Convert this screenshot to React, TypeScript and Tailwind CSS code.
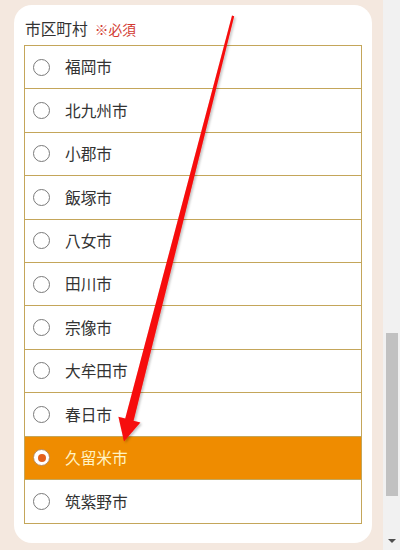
import React from "react";

const CITIES = [
  "福岡市",
  "北九州市",
  "小郡市",
  "飯塚市",
  "八女市",
  "田川市",
  "宗像市",
  "大牟田市",
  "春日市",
  "久留米市",
  "筑紫野市",
];

const SELECTED = "久留米市";

function Radio({ checked }: { checked: boolean }) {
  if (checked) {
    return (
      <span className="flex h-[17px] w-[17px] shrink-0 items-center justify-center rounded-full border border-[#b98a5a] bg-white">
        <span className="h-[8px] w-[8px] rounded-full bg-[#e4601c]" />
      </span>
    );
  }
  return <span className="h-[17px] w-[17px] shrink-0 rounded-full border border-[#7a7a7a] bg-white" />;
}

function CityRow({ name }: { name: string }) {
  const checked = name === SELECTED;
  return (
    <label
      className={
        checked
          ? "flex h-[43.4px] items-center gap-[15px] border-b border-[#c4a65a] bg-[#ef8c00] pl-[8px] last:border-b-0"
          : "flex h-[43.4px] items-center gap-[15px] border-b border-[#c4a65a] bg-white pl-[8px] last:border-b-0"
      }
    >
      <Radio checked={checked} />
      <span className={checked ? "text-[15.7px] text-[#fff3c4]" : "text-[15.7px] text-[#333333]"}>{name}</span>
    </label>
  );
}

function RedArrow() {
  // tapered shaft from the top of the card down to the selected row
  return (
    <svg className="pointer-events-none absolute inset-0" width="400" height="550" viewBox="0 0 400 550">
      <defs>
        <filter id="arrowShadow" x="-20%" y="-5%" width="140%" height="110%">
          <feDropShadow dx="1.5" dy="1.5" stdDeviation="1.2" floodColor="#000" floodOpacity="0.25" />
        </filter>
      </defs>
      <polygon
        filter="url(#arrowShadow)"
        fill="#f60a0a"
        points="232,15.5 234.2,16.3 133.6,420.8 140.4,422.6 124,441.5 118.4,416.8 125.2,418.6"
      />
    </svg>
  );
}

export default function App() {
  return (
    <div
      className="relative flex h-[550px] w-[400px] overflow-hidden bg-[#f4e8df]"
      style={{ fontFamily: '"Noto Sans CJK JP", "Noto Sans", sans-serif' }}
    >
      <div className="flex-1 pb-[7px] pl-[14px] pr-[11px] pt-[5px]">
        <div className="h-full rounded-[18px] bg-white px-[10px] pt-[12px]">
          <div className="flex h-[24px] items-center gap-[7px] pl-[1px]">
            <span className="text-[15.7px] text-[#333333]">市区町村</span>
            <span className="text-[13.7px] text-[#d23a32]">※必須</span>
          </div>
          <div className="mt-[4px] flex flex-col border border-[#c4a65a]">
            {CITIES.map((c) => (
              <CityRow key={c} name={c} />
            ))}
          </div>
        </div>
      </div>

      {/* scrollbar */}
      <div className="flex w-[17px] flex-col items-center bg-[#f1f1f1] pt-[333px]">
        <div className="h-[163px] w-[12px] bg-[#c1c1c1]" />
        <div className="flex-1" />
        <div className="mb-[7px] h-0 w-0 border-x-[4px] border-t-[4px] border-x-transparent border-t-[#505050]" />
      </div>

      <RedArrow />
    </div>
  );
}
